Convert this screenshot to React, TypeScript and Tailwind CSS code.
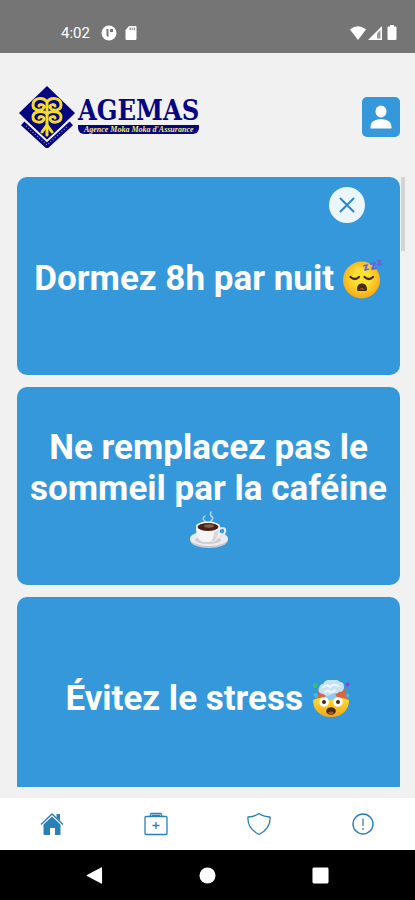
import React, { useState } from 'react';

type Tip = { id: number; text: string; icon: React.ReactNode }

const SleepyFace = () => (
  <svg viewBox="0 0 40 40" className="inline-block h-10 w-10 align-[-10px]" role="img" aria-label="sleeping face">
    <defs>
      <radialGradient id="sleepy" cx=".5" cy=".45" r=".55">
        <stop offset=".4" stopColor="#fde030" />
        <stop offset="1" stopColor="#f6a818" />
      </radialGradient>
    </defs>
    <circle cx="18.500" cy="20" r="18.500" fill="url(#sleepy)" />
    <path d="M7.500 17q4.500 4 8.500 0M21.500 17q4.500 4 8.500 0" fill="none" stroke="#422b0d" strokeWidth="2.200" strokeLinecap="round" />
    <path d="M14 29.500c0-4 2-6 5-6s5 2 5 6c0 2-2 1.500-5 1.500s-5 .5-5-1.500z" fill="#422b0d" />
    <path d="M16 29.500q3-3 6 0z" fill="#b0532b" />
    <path d="M20 6l4-1-2 5 4-1M27 4l5-1-3 6 5-1M34 1l4-1-3 5 4-1" fill="none" stroke="#6a62dd" strokeWidth="1.800" strokeLinejoin="round" />
  </svg>
)

const Coffee = () => (
  <svg viewBox="0 0 40 40" className="inline-block h-10 w-10 align-[-10px]" role="img" aria-label="coffee">
    <ellipse cx="20" cy="29" rx="19" ry="8" fill="#c9c9cd" />
    <ellipse cx="20" cy="27.500" rx="19" ry="7.500" fill="#ececee" />
    <ellipse cx="19" cy="29" rx="13" ry="4" fill="#cfcfd3" />
    <path d="M30 18q7-3 6 3-1 4-8 5" fill="none" stroke="#e4e4e8" strokeWidth="2.200" />
    <path d="M7 16q0 14 8 15h8q8-1 8-15z" fill="#f5f5f7" />
    <path d="M25 21q4-1 5-3-1 10-5 12-2 1-4 1 4-3 4-10z" fill="#d8d8dc" />
    <ellipse cx="19" cy="15.500" rx="12" ry="5" fill="#fff" />
    <ellipse cx="19" cy="16" rx="10.500" ry="4" fill="#4a2119" />
    <ellipse cx="20" cy="15" rx="5" ry="1.700" fill="#8a6045" />
    <path d="M17 11q-5-3-1-6M21 11q5-4 1-6-1-2 0-4" fill="none" stroke="#e8f2fa" strokeWidth="1.500" strokeLinecap="round" opacity=".7" />
  </svg>
)

const ExplodingHead = () => (
  <svg viewBox="0 0 40 40" className="inline-block h-10 w-10 align-[-10px]" role="img" aria-label="exploding head">
    <defs>
      <linearGradient id="head" x1="0" y1="0" x2="0" y2="1">
        <stop offset="0" stopColor="#fde030" />
        <stop offset="1" stopColor="#f5a51b" />
      </linearGradient>
    </defs>
    <path d="M5 8l6 4 2-5 6 5 6-5 3 5 7-4-2 6 4 2-4 6H6l-3-6 4-2z" fill="#dc6540" />
    <path d="M1 20q17-7 36 0c0 10-7 17-18 17S1 30 1 20z" fill="url(#head)" />
    <path d="M13 19q7 3 12-1l-3-7h-8z" fill="#8bcdf0" />
    <path d="M11 14q-6-1-4-6 1-4 4-4 2-5 8-4 5-2 9 2 4 0 4 5 0 5-5 5-2 3-6 1-5 5-10 1z" fill="#c7e2f2" />
    <path d="M11 7q4-3 7 0 4-4 8-1M13 12q3-3 5 0 3 1 5-2" fill="none" stroke="#edf7fd" strokeWidth="2" strokeLinecap="round" />
    <circle cx="12" cy="22" r="4.800" fill="#fff" />
    <circle cx="26" cy="22" r="4.800" fill="#fff" />
    <circle cx="12" cy="22" r="2" fill="#422b0d" />
    <circle cx="26" cy="22" r="2" fill="#422b0d" />
    <ellipse cx="19" cy="31" rx="4.800" ry="3.800" fill="#422b0d" />
    <path d="M16 32.500q3-2 6 0-1 2-3 2t-3-2z" fill="#b0532b" />
    <path d="M1 4l4-1v4l-3 1z" fill="#35c46b" />
    <path d="M33 4l3-2 2 3-3 2z" fill="#8d45d6" />
    <path d="M1 14l4-1 1 4-3 1zM35 13l3 2-2 3-2-2z" fill="#43bce4" />
  </svg>
)

const tips: Tip[] = [
  { id: 1, text: 'Dormez 8h par nuit', icon: <SleepyFace /> },
  { id: 2, text: 'Ne remplacez pas le sommeil par la caféine', icon: <Coffee /> },
  { id: 3, text: 'Évitez le stress', icon: <ExplodingHead /> },
]

const StatusBar = () => (
  <div className="flex h-[53px] shrink-0 items-end justify-between bg-[#757575] pr-[18px] pb-3 pl-[61px] text-white">
    <div className="flex items-center gap-2">
      <span className="w-8 text-[15px] leading-4">4:02</span>
      <svg viewBox="0 0 16 16" className="h-4 w-4" aria-hidden="true">
        <circle cx="8" cy="8" r="7.500" fill="#fff" />
        <path d="M5.500 4v6q0 1.500 2 2V4zM9 4h3v3H9z" fill="#757575" />
      </svg>
      <svg viewBox="0 0 12 16" className="h-4 w-3" aria-hidden="true">
        <path d="M4 1h6.500q1 0 1 1v12q0 1-1 1h-9q-1 0-1-1V5z" fill="#fff" />
        <path d="M4.500 2.500h1.500v2.500H4.500zM6.700 2.500h1.200v2.500H6.700zM8.700 2.500H10v2.500H8.700z" fill="#999" />
      </svg>
    </div>
    <div className="flex items-center">
      <svg viewBox="0 0 18 16" className="h-4 w-[18px]" aria-hidden="true">
        <path d="M1 4.500Q9-2 17 4.500L9 15z" fill="#fff" />
      </svg>
      <svg viewBox="0 0 16 16" className="h-4 w-4" aria-hidden="true">
        <path d="M15 1v14H1z" fill="#fff" />
        <path d="M13.500 5v8.500H10V8.500z" fill="#999" />
      </svg>
      <svg viewBox="0 0 10 16" className="ml-1 h-4 w-[10px]" aria-hidden="true">
        <path d="M3 0h4v1.500h1.500q1 0 1 1V14q0 1-1 1h-7q-1 0-1-1V2.500q0-1 1-1H3z" fill="#fff" />
      </svg>
    </div>
  </div>
)

const Logo = () => (
  <a href="#" className="flex items-center gap-[3px]" aria-label="AGEMAS">
    <svg viewBox="0 0 56 62" className="h-[62px] w-14" aria-hidden="true">
      <path d="M28 0l28 27-28 28L0 27z" fill="#05057f" />
      <path d="M4 37l24 22 24-22" fill="none" stroke="#05057f" strokeWidth="6" />
      <path d="M7 40l21 19 21-19" fill="none" stroke="#8d8db5" strokeWidth="1.500" strokeDasharray="1 2" />
      <path d="M3 32l25 23 25-23" fill="none" stroke="#f1f1f1" strokeWidth="2" />
      <g fill="none" stroke="#f5dc2a" strokeWidth="3" strokeLinecap="round">
        <path d="M28 15v34M28 16c-4-6-14-4-14 3 0 6 10 7 11 2 0-3-5-3-5-1M28 16c4-6 14-4 14 3 0 6-10 7-11 2 0-3 5-3 5-1" />
        <path d="M28 28c-4-4-14-3-14 3 0 6 10 7 11 2 0-3-5-3-5-1M28 28c4-4 14-3 14 3 0 6-10 7-11 2 0-3 5-3 5-1" />
        <path d="M28 39l-5 7M28 39l5 7" />
      </g>
    </svg>
    <div className="flex flex-col pb-1 text-center">
      <span className="font-['DejaVu_Serif_Condensed','Liberation_Serif',serif] text-[27px] leading-7 font-bold text-[#05057f]">AGEMAS</span>
      <span className="rounded-b-md bg-[#05057f] px-1 font-['Liberation_Serif',serif] text-[8px] leading-[9px] font-bold whitespace-nowrap text-[#f5ee65] italic">Agence Moka Moka d'Assurance</span>
    </div>
  </a>
)

const TipCard = ({ tip, onClose }: { tip: Tip; onClose?: () => void }) => (
  <section className="relative flex min-h-[198px] shrink-0 items-center justify-center rounded-[10px] bg-[#3498db] px-3 pt-[5px]">
    <h2 className="text-center text-[35px] leading-[41px] font-bold text-white">{tip.text} {tip.icon}</h2>
    {onClose && (
      <button type="button" onClick={onClose} aria-label="Fermer" className="absolute top-[10px] right-[35px] flex h-9 w-9 items-center justify-center rounded-full bg-[#ebf5fc]">
        <svg viewBox="0 0 16 16" className="h-4 w-4" fill="none" stroke="#2b88c7" strokeWidth="2" strokeLinecap="round">
          <path d="M1.500 1.500l13 13M14.500 1.500l-13 13" />
        </svg>
      </button>
    )}
  </section>
)

const TabBar = () => (
  <nav className="flex h-[52px] shrink-0 items-center bg-white text-[#2980b9]">
    <a href="#accueil" aria-label="Accueil" className="flex flex-1 justify-center">
      <svg viewBox="0 0 24 24" className="h-6 w-6" fill="currentColor">
        <path d="M12 4.500l8.500 8V22q0 1-1 1H15v-7H10v7H4.500q-1 0-1-1v-9.500z" />
        <path d="M1 12.500L12 2l11 10.500" fill="none" stroke="currentColor" strokeWidth="1.400" />
        <path d="M16.500 2h3.500v6.500l-3.500-3z" />
      </svg>
    </a>
    <a href="#soins" aria-label="Soins" className="flex flex-1 justify-center">
      <svg viewBox="0 0 24 24" className="h-6 w-6" fill="none" stroke="currentColor" strokeWidth="1.300">
        <rect x="1" y="4.500" width="22" height="18" rx="1" />
        <path d="M6 4.500l1-3h10l1 3M8 4.500l.5-1h7l.5 1M12 10v7M8.500 13.500h7" />
      </svg>
    </a>
    <a href="#assurance" aria-label="Assurance" className="flex flex-1 justify-center">
      <svg viewBox="0 0 24 24" className="h-6 w-6" fill="none" stroke="currentColor" strokeWidth="1.300" strokeLinejoin="round">
        <path d="M12 1.500Q8 4.500 1 5 0 16 12 22.500 24 16 23 5 16 4.500 12 1.500z" />
      </svg>
    </a>
    <a href="#infos" aria-label="Infos" className="flex flex-1 justify-center">
      <svg viewBox="0 0 24 24" className="h-6 w-6" fill="none" stroke="currentColor" strokeWidth="1.400">
        <circle cx="12" cy="12" r="10" />
        <path d="M12 6.500v7.500M12 16v2" strokeWidth="2" stroke="#7fa6d6" />
      </svg>
    </a>
  </nav>
)

const SystemBar = () => (
  <div className="flex h-[50px] shrink-0 items-center justify-center gap-24 bg-black text-white">
    <button type="button" aria-label="Retour">
      <svg viewBox="0 0 18 18" className="h-[17px] w-[17px]" fill="currentColor"><path d="M17 1v16q0 1-1 .5L1 9.500q-1-.5 0-1L16 .5q1-.5 1 .5z" /></svg>
    </button>
    <button type="button" aria-label="Écran d'accueil">
      <svg viewBox="0 0 18 18" className="h-[17px] w-[17px]" fill="currentColor"><circle cx="9" cy="9" r="8.500" /></svg>
    </button>
    <button type="button" aria-label="Applications récentes">
      <svg viewBox="0 0 18 18" className="h-[17px] w-[17px]" fill="currentColor"><rect x=".5" y=".5" width="17" height="17" rx="1.500" /></svg>
    </button>
  </div>
)

export default function App() {
  const [items, setItems] = useState<Tip[]>(tips)

  return (
    <div className="flex h-screen flex-col bg-[#f1f1f1] font-[Roboto,sans-serif]">
      <StatusBar />
      <header className="flex shrink-0 items-center justify-between pt-[33px] pr-[15px] pb-[29px] pl-[19px]">
        <Logo />
        <button type="button" aria-label="Profil" className="flex h-10 w-[38px] items-center justify-center rounded-[5px] bg-[#3498db]">
          <svg viewBox="0 0 22 24" className="h-6 w-[22px]" fill="#fff">
            <ellipse cx="11" cy="6.500" rx="5.500" ry="6" />
            <path d="M.5 23.500v-2q0-7 10.500-7.500 10.500.5 10.500 7.500v2z" />
          </svg>
        </button>
      </header>
      <main className="relative mb-[11px] min-h-0 flex-1">
        <div className="flex h-full flex-col gap-3 overflow-y-auto pr-[15px] pl-[17px] [scrollbar-width:none]">
          {items.map((tip, i) => (
            <TipCard key={tip.id} tip={tip} onClose={i === 0 ? () => setItems(items.slice(1)) : undefined} />
          ))}
        </div>
        <div className="absolute top-0 right-[10px] h-[74px] w-1 bg-[#d4d4d4]" />
      </main>
      <TabBar />
      <SystemBar />
    </div>
  )
}
